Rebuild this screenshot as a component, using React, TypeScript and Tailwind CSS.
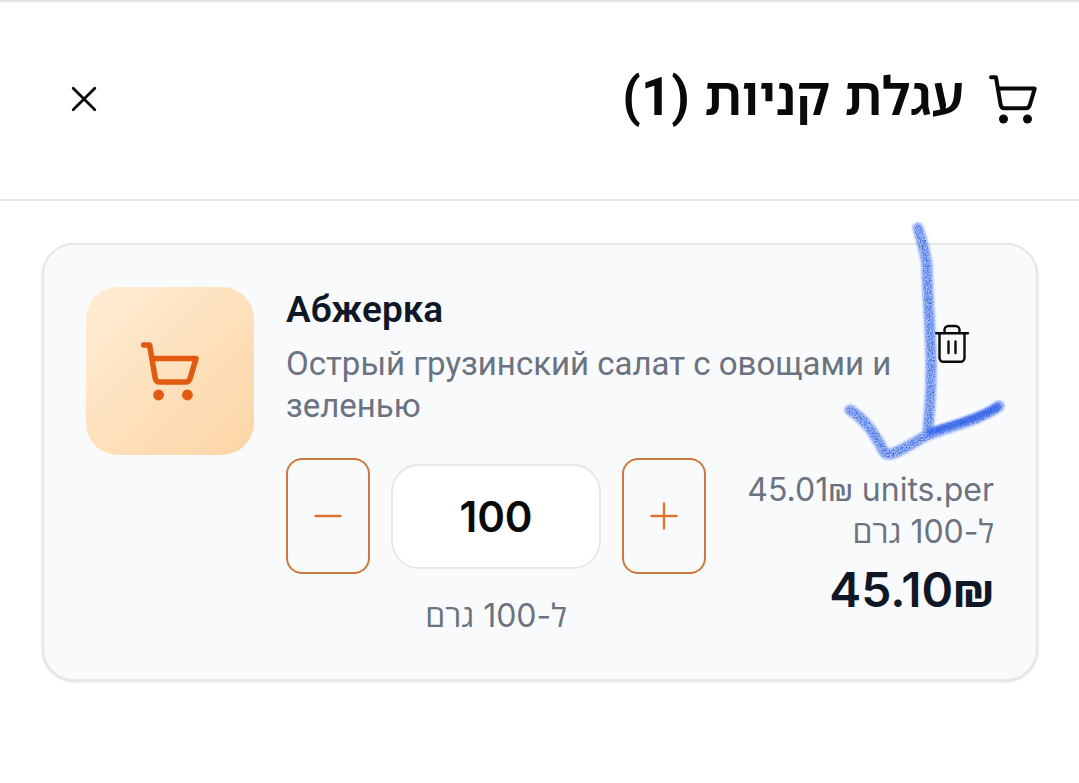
import { useState } from "react";

function CartIcon({ className, strokeWidth }: { className: string; strokeWidth: number }) {
  return (
    <svg viewBox="0 0 50 50" className={className} fill="none" stroke="currentColor" strokeWidth={strokeWidth} strokeLinecap="round" strokeLinejoin="round" aria-hidden="true">
      <path d="M3 3.3H8l4.6 27.3c.4 2.2 1.7 3.6 3.6 3.6h21.600c2 0 3.600-1.400 4.100-3.500L46.700 14.600H10" />
      <circle cx="15.5" cy="45" r="4.5" fill="currentColor" stroke="none" />
      <circle cx="39.5" cy="45" r="4.5" fill="currentColor" stroke="none" />
    </svg>
  );
}

function TrashIcon() {
  return (
    <svg viewBox="0 0 42 42" className="size-[42px]" fill="none" stroke="currentColor" strokeWidth="2.4" strokeLinecap="round" strokeLinejoin="round" aria-hidden="true">
      <path d="M5 11.2h32M8.500 11.200v24.500a4 4 0 0 0 4 4h17a4 4 0 0 0 4-4v-24.500M13.500 11V8a4 4 0 0 1 4-4h7a4 4 0 0 1 4 4v3M17.500 19.500v11.500M24.500 19.500v11.500" />
    </svg>
  );
}

function CrayonArrow() {
  return (
    <svg viewBox="0 0 170 248" className="pointer-events-none absolute -top-[26px] right-6 h-[248px] w-[170px]" fill="none" stroke="#2458e8" strokeLinecap="round" strokeLinejoin="round" aria-hidden="true">
      <defs>
        <filter id="crayon" x="0" y="0" width="170" height="248" filterUnits="userSpaceOnUse">
          <feTurbulence type="fractalNoise" baseFrequency="0.7" numOctaves="2" seed="4" result="noise" />
          <feColorMatrix in="noise" type="matrix" values="0 0 0 0 0  0 0 0 0 0  0 0 0 0 0  2.2 0 0 0 -0.75" result="grain" />
          <feGaussianBlur in="SourceGraphic" stdDeviation="1.4" result="soft" />
          <feComposite in="soft" in2="grain" operator="in" />
        </filter>
        <filter id="haze" x="0" y="0" width="170" height="248" filterUnits="userSpaceOnUse">
          <feGaussianBlur stdDeviation="1" />
        </filter>
      </defs>
      <g filter="url(#haze)" opacity="0.36" strokeWidth="11">
        <path d="M76 9C80 22 84 34 85 48C86 88 90 130 89 155C89 180 87 196 86 212" />
        <path d="M8 191C26 202 36 221 41 231Q44 237 52 234C65 229 75 221 86 216C108 207 136 202 157 187" />
      </g>
      <g filter="url(#crayon)" strokeWidth="9">
        <path d="M76 9C80 22 84 34 85 48C86 88 90 130 89 155C89 180 87 196 86 212" />
        <path d="M8 191C26 202 36 221 41 231Q44 237 52 234C65 229 75 221 86 216C108 207 136 202 157 187" />
      </g>
      <g filter="url(#haze)" opacity="0.65">
        <path d="M88 213C108 206 136 200 155 188" strokeWidth="7" />
      </g>
    </svg>
  );
}

function Shekel() {
  return <span className="font-[Roboto,sans-serif]">₪</span>;
}

export default function App() {
  const [quantity, setQuantity] = useState("100");
  const step = (delta: number) => setQuantity(String(Math.max(0, (Number(quantity) || 0) + delta)));

  return (
    <div className="min-h-screen border-t-2 border-[#e3e3e8] bg-white font-['Inter','Open_Sans',sans-serif] text-[#0a0a0a]">
      <header dir="rtl" className="flex items-center justify-between border-b-2 border-[#e5e5e5] pt-[55px] pr-[41px] pb-[58px] pl-[42px]">
        <h1 className="flex items-center gap-6 text-[53px] leading-[84px] font-semibold">
          <CartIcon className="size-[50px]" strokeWidth={4} />
          <span className="-mt-2 font-['Noto_Sans_Hebrew','Open_Sans',sans-serif]">
            עגלת קניות <span className="font-[Roboto,sans-serif] font-bold">(1)</span>
          </span>
        </h1>
        <button type="button" aria-label="סגור" className="flex size-[84px] items-center justify-center">
          <svg viewBox="0 0 26 26" className="size-[26px]" stroke="currentColor" strokeWidth="2.8" strokeLinecap="round" aria-hidden="true">
            <path d="M2.200 2.200L23.800 23.800M23.800 2.200L2.200 23.800" />
          </svg>
        </button>
      </header>

      <main className="py-[42px] pr-[41px] pl-[42px]">
        <article className="relative flex items-start gap-8 rounded-[32px] border-2 border-[#e5e7eb] bg-[#f9fafc] p-[42px] shadow-sm">
          <div className="flex size-[168px] shrink-0 items-center justify-center rounded-[32px] bg-linear-to-br from-[#ffedd5] to-[#fdd5a5] text-[#e05a12]">
            <CartIcon className="size-[60px]" strokeWidth={4.6} />
          </div>

          <div className="min-w-0 flex-1">
            <div className="flex items-start justify-between">
              <div className="min-w-0 flex-1 font-[Roboto,sans-serif]">
                <h2 className="text-[37px] leading-[46px] font-semibold text-[#101828]">Абжерка</h2>
                <p className="mt-[10px] text-[33px] leading-[42px] text-[#6b7280]">Острый грузинский салат с овощами и зеленью</p>
              </div>
              <button type="button" aria-label="Удалить" className="mt-[14px] flex size-[84px] shrink-0 items-center justify-center">
                <TrashIcon />
              </button>
            </div>

            <div className="mt-[31px] flex items-start justify-between">
              <div>
                <div className="flex items-center gap-[21px] text-[#dd7630]">
                  <button type="button" aria-label="Меньше" onClick={() => step(-100)} className="flex h-[116px] w-[84px] items-center justify-center rounded-2xl border-2 border-[#cc7a3e]">
                    <svg viewBox="0 0 28 28" className="size-7" stroke="currentColor" strokeWidth="2.4" strokeLinecap="round" aria-hidden="true">
                      <path d="M1.500 14h25" />
                    </svg>
                  </button>
                  <input aria-label="Количество" inputMode="numeric" value={quantity} onChange={(e) => setQuantity(e.target.value)} className="h-[105px] w-[210px] rounded-[28px] border-2 border-[#e5e7eb] bg-white text-center text-[42px] font-semibold text-[#0a0a0a]" />
                  <button type="button" aria-label="Больше" onClick={() => step(100)} className="flex h-[116px] w-[84px] items-center justify-center rounded-2xl border-2 border-[#cc7a3e]">
                    <svg viewBox="0 0 28 28" className="size-7" stroke="currentColor" strokeWidth="2.4" strokeLinecap="round" aria-hidden="true">
                      <path d="M1.500 14h25M14 1.500v25" />
                    </svg>
                  </button>
                </div>
                <p dir="rtl" className="mt-[21px] text-center text-[32px] leading-[42px] text-[#6b7280]">ל-100 גרם</p>
              </div>

              <div className="pt-[11px] text-right">
                <p className="text-[32px] leading-[42px] text-[#6b7280]">
                  <span className="block" dir="ltr"><bdi dir="ltr">45.01<Shekel /></bdi> units.per</span>
                  <span className="block" dir="rtl">ל-100 גרם</span>
                </p>
                <p className="mt-1 text-[48px] leading-[66px] font-semibold text-[#101828]">45.10<Shekel /></p>
              </div>
            </div>
          </div>
          <CrayonArrow />
        </article>
      </main>
    </div>
  );
}
